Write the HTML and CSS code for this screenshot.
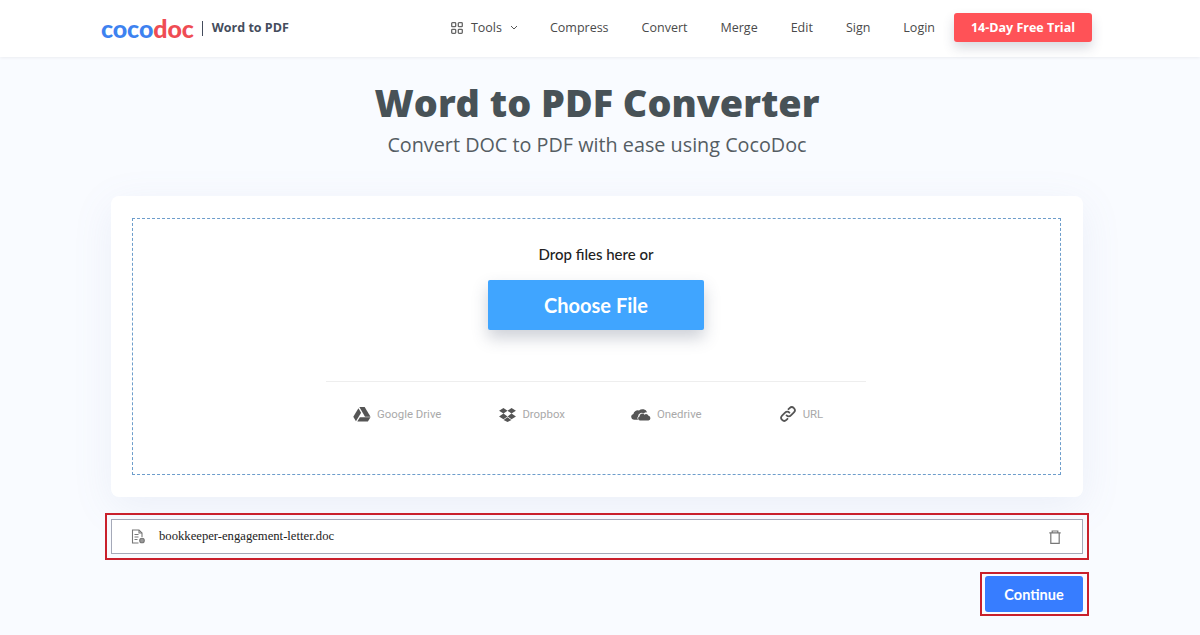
FILE: index.html
```html
<!DOCTYPE html>
<html lang="en">
<head>
<meta charset="utf-8">
<title>Word to PDF Converter</title>
<link rel="stylesheet" href="styles.css">
</head>
<body>
<header class="topbar">
  <div class="brand">
    <span class="logo"><span class="logo-blue">coco</span><span class="logo-red">doc</span></span>
    <span class="brand-sep"></span>
    <span class="brand-name">Word to PDF</span>
  </div>
  <nav class="nav">
    <a class="nav-link nav-tools">
      <svg class="grid-icon" viewBox="0 0 12 12" width="12" height="12" fill="none" stroke="#666" stroke-width="1.3"><rect x="0.7" y="0.7" width="4" height="4" rx="0.8"/><rect x="7.300" y="0.7" width="4" height="4" rx="0.8"/><rect x="0.7" y="7.300" width="4" height="4" rx="0.8"/><rect x="7.300" y="7.300" width="4" height="4" rx="0.8"/></svg>
      <span>Tools</span>
      <svg class="chev" viewBox="0 0 8 5" width="8" height="5" fill="none" stroke="#555" stroke-width="1"><path d="M1 1l3 3 3-3"/></svg>
    </a>
    <a class="nav-link">Compress</a>
    <a class="nav-link">Convert</a>
    <a class="nav-link">Merge</a>
    <a class="nav-link">Edit</a>
    <a class="nav-link">Sign</a>
    <a class="nav-link nav-login">Login</a>
    <a class="trial">14-Day Free Trial</a>
  </nav>
</header>
<main class="main">
  <h1 class="title">Word to PDF Converter</h1>
  <p class="subtitle">Convert DOC to PDF with ease using CocoDoc</p>
  <section class="card">
    <div class="drop">
      <p class="drop-text">Drop files here or</p>
      <button class="choose">Choose File</button>
      <div class="sources">
        <div class="source source-drive">
          <svg viewBox="0 0 20 18" width="18" height="16" fill="#555"><path d="M7 1h6l6.600 11h-6.200z"/><path d="M6 2.400l3 5.200-5.800 9.600L.2 12z"/><path d="M7.600 12.600h12l-3 4.900H4.700z"/></svg>
          <span>Google Drive</span>
        </div>
        <div class="source source-dropbox">
          <svg viewBox="0 0 18 16" width="17" height="15" fill="#555"><path d="M4.700 1L0 4l4.700 3L9 4zM13.300 1L9 4l4.300 3L18 4zM0 10l4.700 3L9 10 4.700 7zM13.300 7L9 10l4.300 3 4.700-3zM4.800 13.900L9 16l4.200-2.100L9 11z"/></svg>
          <span>Dropbox</span>
        </div>
        <div class="source source-onedrive">
          <svg viewBox="0 0 20 14" width="20" height="14" fill="#555"><path d="M7.500 12.800H3a3 3 0 0 1-.6-5.900A4.200 4.200 0 0 1 8 3.600 5 5 0 0 1 16.200 5.500 3 3 0 0 0 12.900 6.600 3.600 3.600 0 0 0 7.100 9.400 2.100 2.100 0 0 0 7.500 12.800z"/><path d="M9 13.500a2 2 0 0 1-.5-3.900A2.800 2.800 0 0 1 13.500 7.700 2.500 2.500 0 0 1 17.500 8.800 2.400 2.400 0 0 1 17.500 13.500z"/></svg>
          <span>Onedrive</span>
        </div>
        <div class="source source-url">
          <svg viewBox="0 0 16 16" width="16" height="16" fill="none" stroke="#555" stroke-width="1.800" stroke-linecap="round"><path d="M6.600 9.400a3 3 0 0 0 4.300 0l3-3a3 3 0 0 0-4.300-4.300L8.500 3.200"/><path d="M9.400 6.600a3 3 0 0 0-4.300 0l-3 3a3 3 0 0 0 4.300 4.300l1.100-1.100"/></svg>
          <span>URL</span>
        </div>
      </div>
    </div>
  </section>
  <div class="file-outline">
    <div class="file-row">
      <svg class="file-icon" viewBox="0 0 14 15" width="14" height="15" fill="none" stroke="#777" stroke-width="1.100"><path d="M7.500 14H1.500V1h6.500l3 3v4"/><path d="M8 1v3h3M3.500 5.500h4M3.500 8h4M3.500 10.500h3"/><circle cx="11" cy="11.500" r="2.300" fill="#999"/></svg>
      <span class="file-name">bookkeeper-engagement-letter.doc</span>
      <svg class="trash" viewBox="0 0 12 14" width="12" height="14" fill="none" stroke="#777" stroke-width="1.200"><path d="M0.300 2.800h11.400M3.200 2.800V1h5.600v1.800M1.800 2.800v10.600h8.400V2.800"/></svg>
    </div>
  </div>
  <div class="actions">
    <div class="continue-outline"><button class="continue">Continue</button></div>
  </div>
</main>
</body>
</html>
```
FILE: styles.css
```css
* { box-sizing: border-box; }
html, body { margin: 0; height: 635px; overflow: hidden; }
body {
  background: #f9fbff;
  font-family: "Open Sans", sans-serif;
  color: #444;
}
.topbar {
  height: 57px;
  background: #fff;
  box-shadow: 0 1px 3px rgba(0, 0, 0, 0.06);
  display: flex;
  align-items: center;
  justify-content: space-between;
  padding: 0 108px 2px 101px;
}
.brand { display: flex; align-items: center; }
.logo {
  font-family: "Lato", sans-serif;
  font-weight: 900;
  font-size: 25px;
  letter-spacing: -0.1px;
  line-height: 28px;
}
.logo-blue { color: #3d82f0; }
.logo-red { color: #ef4c53; }
.brand-sep { width: 1px; height: 15px; background: #444c5c; margin: 2px 9px 0 8px; }
.brand-name { font-weight: 700; font-size: 12.5px; color: #454d5d; }
.nav { display: flex; align-items: center; }
.nav-link { font-size: 12.5px; color: #4a4a4a; margin-right: 33px; white-space: nowrap; }
.nav-tools { display: flex; align-items: center; gap: 8px; margin-right: 32px; }
.nav-login { margin-right: 19px; }
.trial {
  width: 138px;
  height: 29px;
  background: #ff5257;
  color: #fff;
  border-radius: 3px;
  font-weight: 700;
  font-size: 12.5px;
  display: flex;
  align-items: center;
  justify-content: center;
  box-shadow: 0 6px 12px rgba(60, 70, 100, 0.2);
}
.main {
  display: flex;
  flex-direction: column;
  align-items: center;
  padding-right: 6px;
}
.title {
  margin: 22px 0 0;
  font-size: 37.800px;
  line-height: 48px;
  font-weight: 800;
  color: #485257;
}
.subtitle {
  margin: 3px 0 0;
  font-size: 19.800px;
  line-height: 30px;
  color: #555d63;
}
.card {
  width: 972px;
  height: 301px;
  margin-top: 36px;
  background: #fff;
  border-radius: 8px;
  padding: 22px 22px 22px 21px;
  box-shadow: 0 10px 40px rgba(120, 140, 190, 0.1);
}
.drop {
  height: 257px;
  border: 1px dashed #6d9dcb;
  padding-right: 1px;
  display: flex;
  flex-direction: column;
  align-items: center;
}
.drop-text {
  margin: 26px 0 0;
  font-family: "Lato", sans-serif;
  font-weight: 500;
  font-size: 15px;
  line-height: 19px;
  color: #222;
}
.choose {
  width: 216px;
  height: 50px;
  margin-top: 16px;
  border: 0;
  border-radius: 2px;
  background: #40a5ff;
  color: #fff;
  font-family: "Lato", sans-serif;
  font-weight: 700;
  font-size: 20px;
  padding-bottom: 2px;
  box-shadow: 0 8px 16px rgba(60, 70, 100, 0.25);
}
.sources {
  width: 540px;
  margin-top: 51px;
  padding-top: 23px;
  border-top: 1px solid #eeeeee;
  display: flex;
  font-family: "Roboto", sans-serif;
  font-size: 11.400px;
  color: #a9a9a9;
}
.source { display: flex; align-items: center; gap: 6px; height: 18px; }
.source-drive { margin-left: 27px; }
.source-dropbox { margin-left: 58px; }
.source-onedrive { margin-left: 66px; }
.source-url { margin-left: 78px; gap: 7px; }
.file-outline {
  width: 984px;
  height: 47px;
  margin-top: 16px;
  border: 2px solid #c9202c;
  padding: 4px 4px 4px 4px;
}
.file-row {
  height: 100%;
  background: #fff;
  border: 1px solid #a5a9b8;
  display: flex;
  align-items: center;
  padding: 0 21px 0 19px;
}
.file-name {
  flex: 1;
  margin-left: 14px;
  font-family: "Liberation Serif", serif;
  font-size: 12.670px;
  color: #222;
}
.actions { width: 984px; margin-top: 12px; display: flex; justify-content: flex-end; }
.continue-outline { border: 2px solid #c9202c; padding: 2px 4px 2px 3px; width: 109px; height: 44px; }
.continue {
  width: 100%;
  height: 100%;
  border: 0;
  border-radius: 3px;
  background: #377dff;
  color: #fff;
  font-family: "Lato", sans-serif;
  font-weight: 700;
  font-size: 14.500px;
}
```
